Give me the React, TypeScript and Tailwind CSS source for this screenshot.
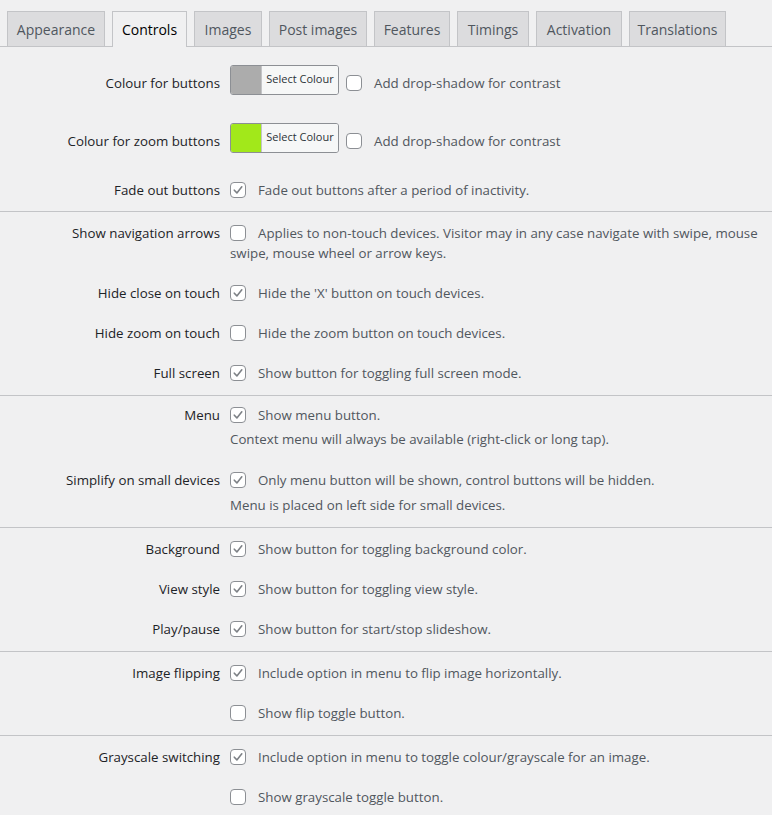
import React from "react";

const tabs: { name: string; w: string; active?: boolean }[] = [
  { name: "Appearance", w: "w-[98px]" },
  { name: "Controls", w: "w-[75px]", active: true },
  { name: "Images", w: "w-[68px]" },
  { name: "Post images", w: "w-[98px]" },
  { name: "Features", w: "w-[76px]" },
  { name: "Timings", w: "w-[72px]" },
  { name: "Activation", w: "w-[86px]" },
  { name: "Translations", w: "w-[97px]" },
];

function Check({ checked }: { checked?: boolean }) {
  return (
    <span className="inline-flex align-top mt-[2px] mr-[12px] w-[16px] h-[16px] shrink-0 items-center justify-center rounded-[4px] border border-[#8c8f94] bg-white">
      {checked && (
        <svg width="12" height="12" viewBox="0 0 12 12" fill="none">
          <path d="M2.3 6.2 L4.9 8.9 L9.8 2.8" stroke="#7d8186" strokeWidth="1.6" strokeLinecap="round" strokeLinejoin="round" />
        </svg>
      )}
    </span>
  );
}

function Row({
  label,
  children,
  pad = "py-[10px]",
}: {
  label?: string;
  children: React.ReactNode;
  pad?: string;
}) {
  return (
    <div className={`flex ${pad}`}>
      <div className="w-[220px] shrink-0 text-right leading-[20px] text-[#1d2327]">{label}</div>
      <div className="flex-1 pl-[10px] pr-[6px] leading-[20px] text-[#50575e]">{children}</div>
    </div>
  );
}

function Picker({ color }: { color: string }) {
  return (
    <div className="flex h-[30px] w-[109px] -mt-[8px] -mb-[2px] mr-[7px] shrink-0 overflow-hidden rounded-[3px] border border-[#8c8f94]">
      <div className="w-[30px] h-full" style={{ background: color }} />
      <div className="flex-1 flex items-center justify-center bg-[#f6f7f7] border-l border-[#c3c4c7] text-[11px] text-[#2c3338] leading-none pb-[3px]">
        Select Colour
      </div>
    </div>
  );
}

function Sep() {
  return <div className="h-px bg-[#c3c4c7]" />;
}

export default function App() {
  return (
    <div
      className="min-h-[815px] w-[772px] bg-[#f0f0f1] text-[13.3px] overflow-hidden"
      style={{ fontFamily: '"Open Sans", "Noto Sans", sans-serif' }}
    >
      <div className="pt-[11px]">
        <div className="flex items-end gap-[7px] pl-[7px] border-b border-[#c3c4c7] h-[36px]">
          {tabs.map((t) => (
            <div
              key={t.name}
              className={`${t.w} shrink-0 flex items-center justify-center border border-b-0 border-[#c3c4c7] text-[14px] ${
                t.active
                  ? "h-[36px] -mb-px bg-[#f0f0f1] text-black"
                  : "h-[35px] bg-[#dcdcde] text-[#50575e]"
              }`}
            >
              {t.name}
            </div>
          ))}
        </div>
      </div>

      <div className="pt-[16px] pb-[1px]">
        <Row label="Colour for buttons" pad="pt-[10px] pb-[28px]">
          <div className="flex items-start">
            <Picker color="#acacac" />
            <Check />
            <span>Add drop-shadow for contrast</span>
          </div>
        </Row>
        <Row label="Colour for zoom buttons" pad="pt-[10px] pb-[19px]">
          <div className="flex items-start">
            <Picker color="#a2e81a" />
            <Check />
            <span>Add drop-shadow for contrast</span>
          </div>
        </Row>
        <Row label="Fade out buttons">
          <Check checked />
          Fade out buttons after a period of inactivity.
        </Row>
      </div>
      <Sep />

      <div className="pt-[1px] pb-[2px]">
        <Row label="Show navigation arrows">
          <Check />
          Applies to non-touch devices. Visitor may in any case navigate with swipe, mouse swipe, mouse wheel or arrow keys.
        </Row>
        <Row label="Hide close on touch">
          <Check checked />
          Hide the 'X' button on touch devices.
        </Row>
        <Row label="Hide zoom on touch">
          <Check />
          Hide the zoom button on touch devices.
        </Row>
        <Row label="Full screen">
          <Check checked />
          Show button for toggling full screen mode.
        </Row>
      </div>
      <Sep />

      <div className="pb-[2px]">
        <Row label="Menu" pad="pt-[9px] pb-[10px]">
          <div>
            <Check checked />
            Show menu button.
          </div>
          <p className="mt-[4px]">Context menu will always be available (right-click or long tap).</p>
        </Row>
        <Row label="Simplify on small devices" pad="pt-[11px] pb-[10px]">
          <div>
            <Check checked />
            Only menu button will be shown, control buttons will be hidden.
          </div>
          <p className="mt-[5px]">Menu is placed on left side for small devices.</p>
        </Row>
      </div>
      <Sep />

      <div className="pt-[1px] pb-[2px]">
        <Row label="Background">
          <Check checked />
          Show button for toggling background color.
        </Row>
        <Row label="View style">
          <Check checked />
          Show button for toggling view style.
        </Row>
        <Row label="Play/pause">
          <Check checked />
          Show button for start/stop slideshow.
        </Row>
      </div>
      <Sep />

      <div className="pt-[1px] pb-[2px]">
        <Row label="Image flipping">
          <Check checked />
          Include option in menu to flip image horizontally.
        </Row>
        <Row>
          <Check />
          Show flip toggle button.
        </Row>
      </div>
      <Sep />

      <div className="pt-[1px]">
        <Row label="Grayscale switching">
          <Check checked />
          Include option in menu to toggle colour/grayscale for an image.
        </Row>
        <Row>
          <Check />
          Show grayscale toggle button.
        </Row>
      </div>
    </div>
  );
}
